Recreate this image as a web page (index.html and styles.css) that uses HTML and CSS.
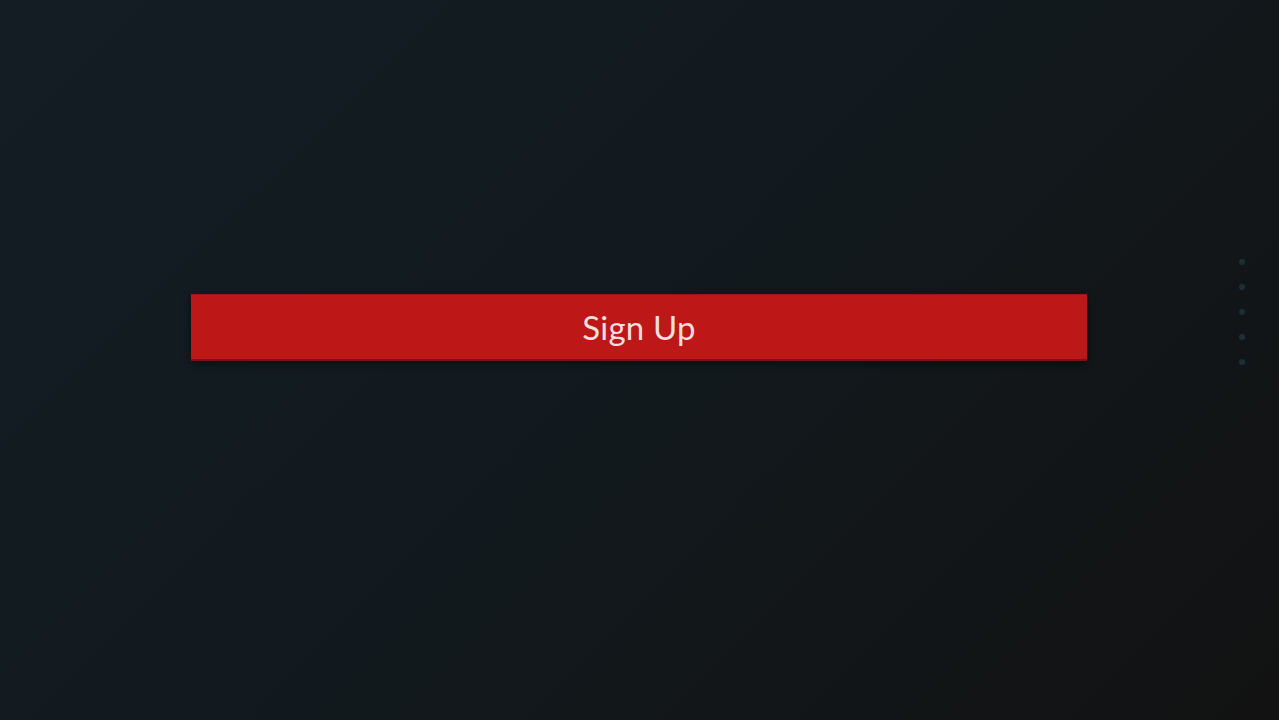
FILE: index.html
```html
<!DOCTYPE html>
<html>
<head>
<meta charset="utf-8">
<link rel="stylesheet" href="styles.css">
</head>
<body>
<main class="stage">
  <button class="signup">Sign Up</button>
  <nav class="dots">
    <span class="dot"></span>
    <span class="dot"></span>
    <span class="dot"></span>
    <span class="dot"></span>
    <span class="dot"></span>
  </nav>
</main>
</body>
</html>
```
FILE: styles.css
```css
html, body {
  margin: 0;
  padding: 0;
  height: 100%;
}
body {
  background: linear-gradient(135deg, #131d23 0%, #121a1f 45%, #121212 100%);
  font-family: Lato, "Open Sans", sans-serif;
  overflow: hidden;
}
.stage {
  position: relative;
  height: 720px;
  display: flex;
  justify-content: flex-start;
  align-items: flex-start;
}
.signup {
  margin-top: 294px;
  margin-left: 191px;
  width: 896px;
  height: 67px;
  background: #bd1717;
  border: none;
  border-top: 1px solid #a51414;
  border-bottom: 2px solid #7e1212;
  color: #f3dede;
  font-family: Lato, sans-serif;
  font-size: 33px;
  font-weight: 400;
  letter-spacing: 0.2px;
  box-shadow: 0 3px 8px rgba(0,0,0,0.45);
  padding: 0;
  cursor: pointer;
}
.dots {
  position: absolute;
  left: 1239px;
  top: 259px;
  display: flex;
  flex-direction: column;
  gap: 19px;
}
.dot {
  width: 6px;
  height: 6px;
  border-radius: 50%;
  background: #1b2f3b;
}
```
